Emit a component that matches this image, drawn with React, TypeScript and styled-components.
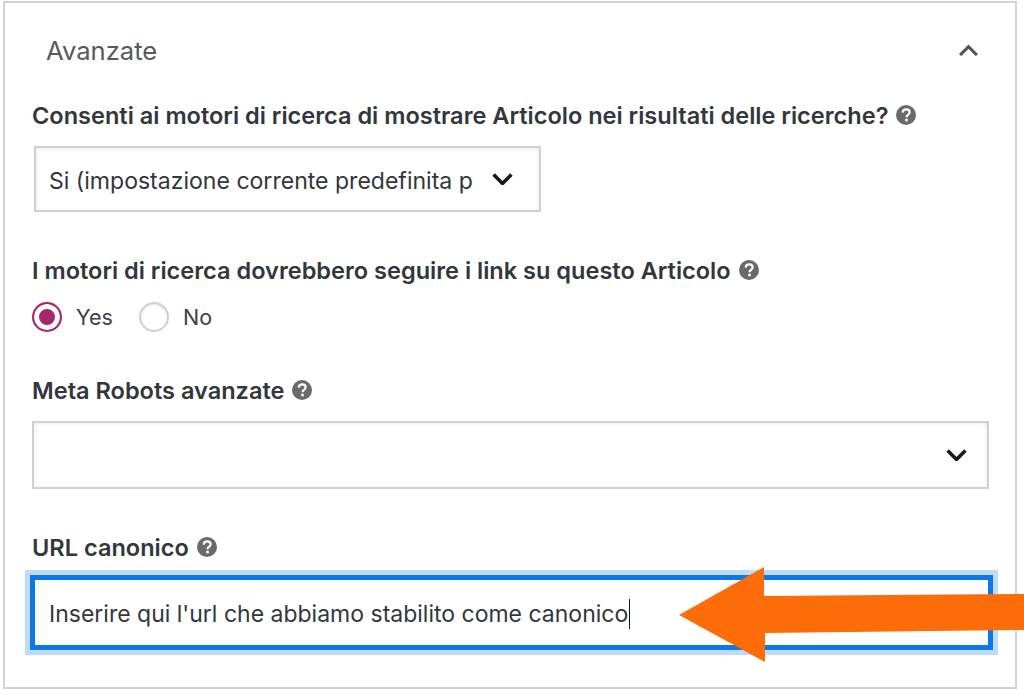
import React from 'react';
import styled, { createGlobalStyle } from 'styled-components';

const GlobalStyle = createGlobalStyle`
  html, body {
    margin: 0;
    padding: 0;
    background: #ffffff;
    overflow: hidden;
  }
`;

function HelpIcon() {
  return (
    <HelpSvg viewBox="0 0 20 20" aria-hidden="true">
      <circle cx="10" cy="10" r="10" fill="#6a6a6a" />
      <path
        d="M6.7 7.6c.1-2 1.500-3.200 3.500-3.200 2 0 3.400 1.200 3.400 2.900 0 1.200-.6 2-1.700 2.700-1 .6-1.300 1-1.300 1.900v.4"
        fill="none"
        stroke="#ffffff"
        strokeWidth="2.200"
      />
      <circle cx="10.500" cy="15" r="1.500" fill="#ffffff" />
    </HelpSvg>
  );
}

function Chevron({ up, width }: { up?: boolean; width: number }) {
  return (
    <svg width={width} height={width * 0.6} viewBox="0 0 20 12" aria-hidden="true">
      <path
        d={up ? 'M2 10.500 10 2.500l8 8' : 'M1.500 1.500 10 10l8.500-8.500'}
        fill="none"
        stroke={up ? '#50555a' : '#16181a'}
        strokeWidth={up ? 3 : 3.4}
      />
    </svg>
  );
}

export default function App() {
  return (
    <Panel>
      <GlobalStyle />
      <Header>
        <Title>Avanzate</Title>
        <Chevron up width={21} />
      </Header>

      <Label>
        Consenti ai motori di ricerca di mostrare Articolo nei risultati delle ricerche? <HelpIcon />
      </Label>
      <Select $narrow>
        <SelectText>Si (impostazione corrente predefinita p</SelectText>
        <Chevron width={21} />
      </Select>

      <Label $top={46}>
        I motori di ricerca dovrebbero seguire i link su questo Articolo <HelpIcon />
      </Label>
      <RadioRow>
        <Radio $checked />
        <RadioText>Yes</RadioText>
        <Radio />
        <RadioText>No</RadioText>
      </RadioRow>

      <Label $top={45}>
        Meta Robots avanzate <HelpIcon />
      </Label>
      <Select>
        <SelectText />
        <Chevron width={21} />
      </Select>

      <Label $top={46}>
        URL canonico <HelpIcon />
      </Label>
      <UrlField>
        <Typed>Inserire qui l'url che abbiamo stabilito come canonico</Typed>
      </UrlField>

      <Arrow viewBox="0 0 345 96" aria-hidden="true">
        <path d="M0 48 85 0v29l260-2v36L86 66v29z" fill="#fc6c08" />
      </Arrow>
    </Panel>
  );
}

const Panel = styled.main`
  position: relative;
  box-sizing: border-box;
  width: 1014px;
  height: 688px;
  margin: 1px 0 0 3px;
  padding: 0 27px 0 27px;
  border: 2px solid #d2d2d2;
  background: #ffffff;
  font-family: Inter, 'Liberation Sans', sans-serif;
  color: #32373c;
`;

const Header = styled.header`
  display: flex;
  align-items: center;
  justify-content: space-between;
  height: 42px;
  padding: 26px 9px 0 14px;
  margin-bottom: 32px;
`;

const Title = styled.h2`
  margin: 0;
  font-size: 25.600px;
  font-weight: 400;
  color: #555a5f;
`;

const Label = styled.div<{ $top?: number }>`
  display: flex;
  align-items: center;
  gap: 8px;
  box-sizing: border-box;
  height: 26px;
  padding-bottom: 2px;
  margin-top: ${(p) => p.$top ?? 0}px;
  font-size: 23.560px;
  font-weight: 600;
  white-space: nowrap;
  color: #32373c;
`;

const HelpSvg = styled.svg`
  width: 20px;
  height: 20px;
  flex: none;
`;

const Select = styled.div<{ $narrow?: boolean }>`
  display: flex;
  align-items: center;
  justify-content: space-between;
  box-sizing: border-box;
  width: ${(p) => (p.$narrow ? '507px' : '957px')};
  height: ${(p) => (p.$narrow ? '66px' : '68px')};
  margin-top: 17px;
  margin-left: ${(p) => (p.$narrow ? '2px' : '0')};
  padding: 0 ${(p) => (p.$narrow ? '26px' : '20px')} 0 13px;
  border: 2px solid #d0d0d0;
  box-shadow: inset 0 1px 4px rgba(0, 0, 0, 0.08);
  background: #ffffff;
`;

const SelectText = styled.span`
  padding-top: 3px;
  white-space: nowrap;
  font-size: 23.050px;
  color: #32373c;
`;

const RadioRow = styled.div`
  display: flex;
  align-items: center;
  height: 32px;
  margin-top: 17px;
`;

const Radio = styled.span<{ $checked?: boolean }>`
  box-sizing: border-box;
  flex: none;
  width: 30px;
  height: 30px;
  border-radius: 50%;
  border: 2px solid ${(p) => (p.$checked ? '#a4286a' : '#cfcfcf')};
  background: ${(p) => (p.$checked ? '#a4286a' : '#ffffff')};
  box-shadow: ${(p) =>
    p.$checked ? 'inset 0 0 0 5px #ffffff' : 'inset 0 1px 3px rgba(0, 0, 0, 0.1)'};
`;

const RadioText = styled.span`
  width: 77px;
  padding-left: 14px;
  box-sizing: border-box;
  font-size: 21.500px;
  color: #3c4146;
  &:last-child {
    width: auto;
  }
`;

const UrlField = styled.div`
  display: flex;
  align-items: center;
  box-sizing: border-box;
  width: 963px;
  height: 75px;
  margin: 14px 0 0 -2px;
  padding: 3px 14px 0;
  border: 5px solid #0a78e6;
  box-shadow: 0 0 0 5px #bedcfa;
  background: #ffffff;
`;

const Typed = styled.span`
  padding-right: 1px;
  border-right: 1px solid #16181a;
  font-size: 23px;
  line-height: 30px;
  white-space: nowrap;
  color: #32373c;
`;

const Arrow = styled.svg`
  position: absolute;
  left: 674px;
  top: 564px;
  width: 345px;
  height: 96px;
`;
